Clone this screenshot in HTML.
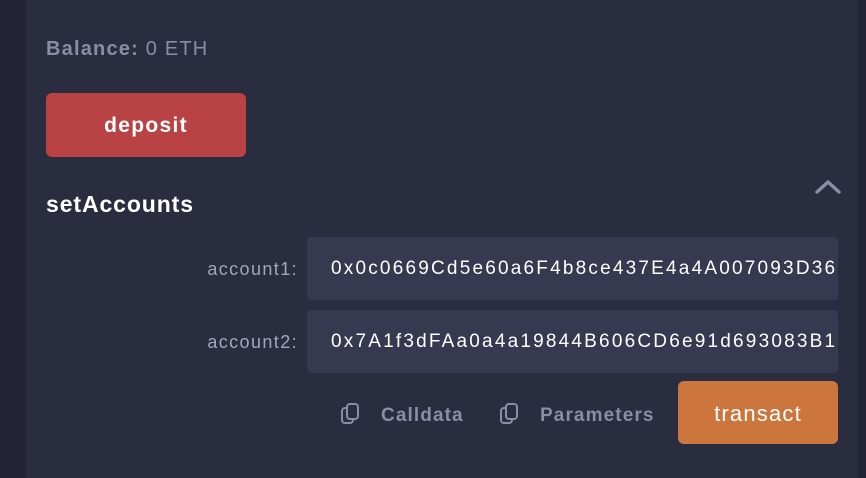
<!DOCTYPE html><html><head><style>
body{margin:0;width:866px;height:478px;background:#2a2c3f;position:relative;overflow:hidden;font-family:"Liberation Sans",sans-serif}
.l{position:absolute;left:0;top:0;width:26px;height:478px;background:#222335}
.r{position:absolute;left:858px;top:0;width:8px;height:478px;background:#222335}
.a{position:absolute}
.in{position:absolute;left:307px;width:531px;height:63px;background:#363950;border-radius:4px;color:#fff;font-size:19px;line-height:63px;padding-left:24px;box-sizing:border-box;overflow:hidden;white-space:nowrap;letter-spacing:2.2px}
.lab{position:absolute;right:568px;color:#a3a7bb;font-size:18px;letter-spacing:1.4px}
.btn{position:absolute;color:#fff;text-align:center;border-radius:6px}
.g{color:#8a8ea4;font-weight:bold;font-size:19px;letter-spacing:1.1px}
</style></head><body>
<div class="l"></div><div class="r"></div>
<div class="a" style="left:46px;top:38px;font-size:20px;letter-spacing:1.2px;color:#8a8ea4"><b>Balance:</b> 0 ETH</div>
<div class="btn" style="left:46px;top:93px;width:200px;height:64px;line-height:66px;background:#b94244;font-weight:bold;font-size:21px;letter-spacing:1.3px">deposit</div>
<div class="a" style="left:46px;top:191px;font-size:23px;letter-spacing:0.9px;color:#fff;font-weight:bold">setAccounts</div>
<svg class="a" style="left:815px;top:179px" width="26" height="16"><path d="M2 13L13 3L24 13" stroke="#8a8ea4" stroke-width="3.5" fill="none" stroke-linecap="round" stroke-linejoin="round"/></svg>
<div class="lab" style="top:259px">account1:</div>
<div class="in" style="top:237px">0x0c0669Cd5e60a6F4b8ce437E4a4A007093D36</div>
<div class="lab" style="top:332px">account2:</div>
<div class="in" style="top:310px">0x7A1f3dFAa0a4a19844B606CD6e91d693083B12</div>
<svg class="a" style="left:340px;top:402px" width="22" height="24"><rect x="2" y="6" width="11" height="15" rx="3" stroke="#8a8ea4" stroke-width="2" fill="#2a2c3f"/><rect x="7" y="2" width="11" height="15" rx="3" stroke="#8a8ea4" stroke-width="2" fill="#2a2c3f"/></svg>
<div class="a g" style="left:381px;top:405px">Calldata</div>
<svg class="a" style="left:499px;top:402px" width="22" height="24"><rect x="2" y="6" width="11" height="15" rx="3" stroke="#8a8ea4" stroke-width="2" fill="#2a2c3f"/><rect x="7" y="2" width="11" height="15" rx="3" stroke="#8a8ea4" stroke-width="2" fill="#2a2c3f"/></svg>
<div class="a g" style="left:540px;top:405px">Parameters</div>
<div class="btn" style="left:678px;top:381px;width:160px;height:63px;line-height:66px;background:#cc763e;font-size:22px;letter-spacing:1.2px">transact</div>
</body></html>
